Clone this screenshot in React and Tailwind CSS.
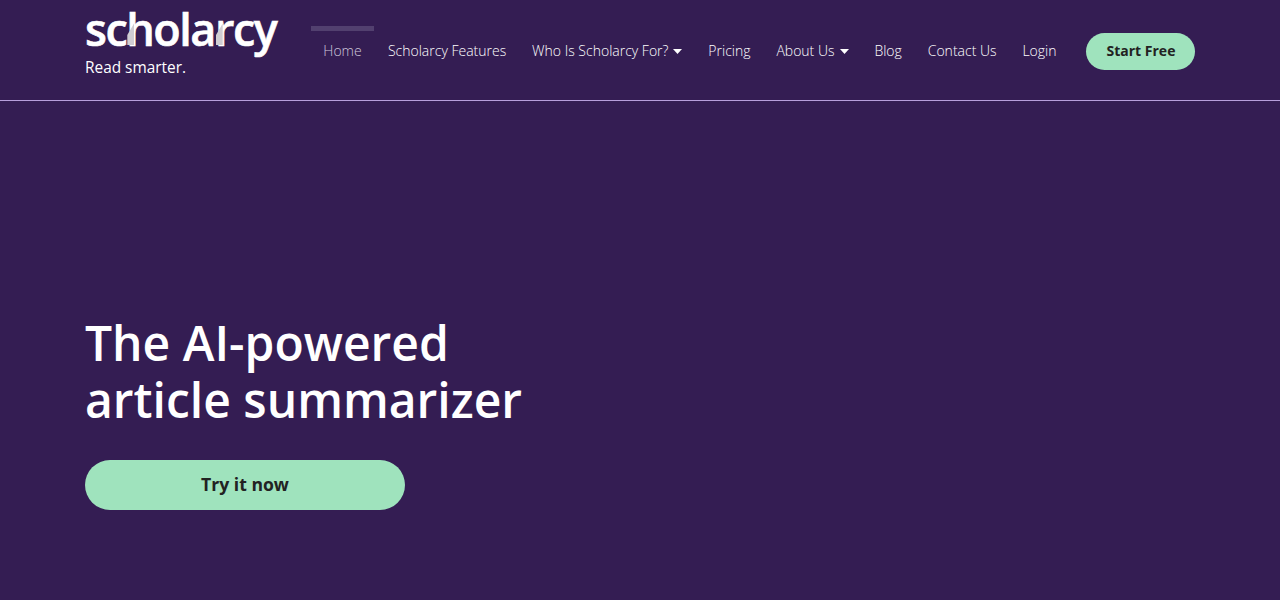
import React from 'react';

const navItems = [
  { label: 'Scholarcy Features' },
  { label: 'Who Is Scholarcy For?', caret: true },
  { label: 'Pricing' },
  { label: 'About Us', caret: true },
  { label: 'Blog' },
  { label: 'Contact Us' },
  { label: 'Login' },
];

const Caret = () => (
  <svg className="ml-[5px] mt-[1px]" width="9" height="5" viewBox="0 0 9 5">
    <path d="M0 0h9L4.5 5z" fill="#ffffff" />
  </svg>
);

const Logo = () => (
  <div className="w-[192px] pt-[4px] shrink-0">
    <div className="relative h-[50px]">
      <div className="text-white font-semibold text-[45px] leading-[50px] tracking-[-1.5px] whitespace-nowrap [-webkit-text-stroke:0.6px_white]">
        scholarcy
      </div>
      {/* grey cuts in the h and r */}
      <svg className="absolute left-0 top-0" width="192" height="50" viewBox="0 0 192 50">
        <path d="M42.3 31L49 19.5V41H42.3z" fill="#cfcdd2" />
        <path d="M131 31L137.7 19.5V41H131z" fill="#cfcdd2" />
      </svg>
    </div>
    <div className="text-white text-[15.4px] leading-[22px] mt-[3px]">Read smarter.</div>
  </div>
);

export default function App() {
  return (
    <div className="min-h-[600px] bg-[#341d53] font-['Open_Sans',sans-serif]">
      <header className="h-[101px] border-b border-[#b79fdc] px-[85px] flex items-start">
        <Logo />
        <nav className="ml-[34px] flex items-start">
          <a className="mt-[26px] mr-[1px] w-[63px] border-t-[5px] border-[#52406f] text-center text-sm font-light text-[#cfc8dc] leading-[19px] pt-[10px]">
            Home
          </a>
          {navItems.map((item) => (
            <a
              key={item.label}
              className="mt-[41px] px-[12.95px] flex items-center text-sm font-light text-white leading-[19px] whitespace-nowrap"
            >
              {item.label}
              {item.caret && <Caret />}
            </a>
          ))}
          <button className="mt-[33px] ml-[17px] w-[109px] h-[37px] pb-[2px] rounded-full bg-[#9fe3bd] text-[#222222] text-sm font-bold">
            Start Free
          </button>
        </nav>
      </header>
      <main className="px-[85px] pt-[213px]">
        <h1 className="text-white text-[48px] leading-[57px] font-semibold">
          The AI-powered
          <br />
          article summarizer
        </h1>
        <button className="mt-[32px] block w-[320px] h-[50px] pb-[1px] rounded-full bg-[#9fe3bd] text-[#222222] text-[17.6px] font-bold">
          Try it now
        </button>
      </main>
    </div>
  );
}
